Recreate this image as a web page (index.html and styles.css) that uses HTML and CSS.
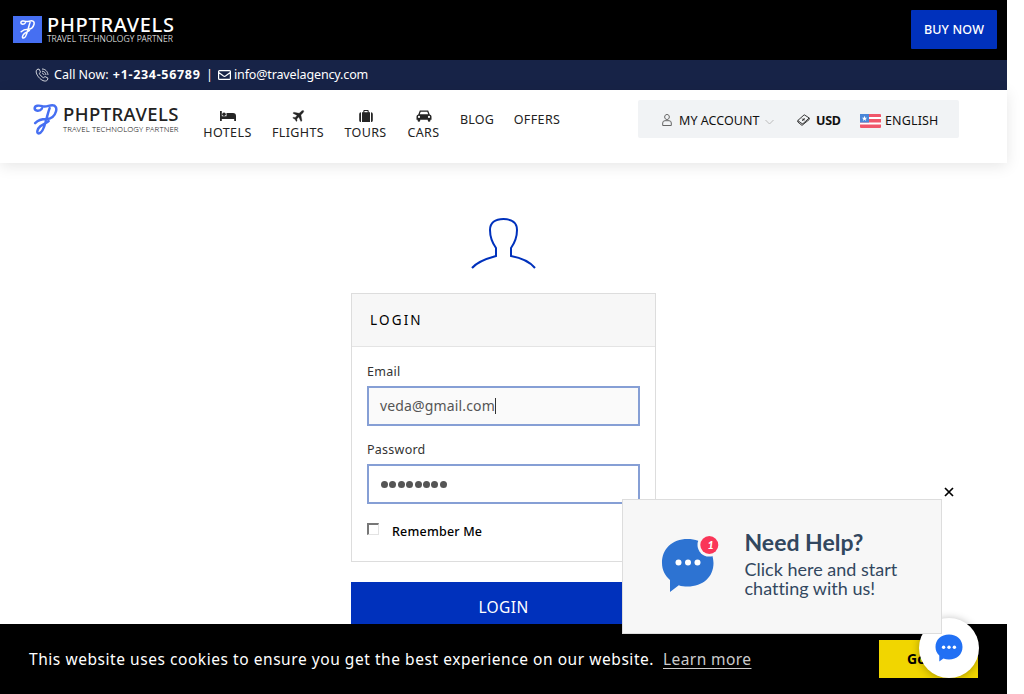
FILE: index.html
```html
<!DOCTYPE html>
<html lang="en">
<head>
<meta charset="utf-8">
<title>Login</title>
<link rel="stylesheet" href="styles.css">
</head>
<body>
<svg class="defs" width="0" height="0">
  <symbol id="swirl" viewBox="0 0 24 30">
    <path d="M8.5 4.5C6.5 7.5 1.5 7 1.5 4.2C1.5 1.5 5.5 1 9 2.2C13 3.2 15 1.2 18.5 1.2C22 1.2 23 4 22.2 7C21 11.5 17.5 14.5 12.5 14.5M16 4C14.5 8 13.8 11.5 12.5 16C11 22 8.5 28.5 5.5 28.5C3 28.5 4 24 7 21.5C9.5 19.5 13 18.5 15 16.5M12.5 14.5C9 14.5 5 15.5 2 18.5" fill="none" stroke="currentColor" stroke-width="2.4" stroke-linecap="round" stroke-linejoin="round"/>
  </symbol>
</svg>
<div class="page">
  <header>
    <div class="promo">
      <div class="brand brand-light">
        <span class="brand-mark"><svg class="mark"><use href="#swirl"/></svg></span>
        <span class="brand-text"><b>PHPTRAVELS</b><small>TRAVEL TECHNOLOGY PARTNER</small></span>
      </div>
      <a class="buy">BUY NOW</a>
    </div>
    <div class="contact">
      <svg class="phone" viewBox="0 0 14 14"><path d="M2 1.5L4 1L5.5 4L4.4 5.4C5 7.2 6.8 9 8.6 9.7L10 8.5L13 10.2L12.3 12.2C10 14.4 6 12 3.8 9.3C1.5 6.6.3 3.3 2 1.5ZM7 1C10.3 1 12.8 3.5 13 7M7 3.2C9.2 3.2 10.8 4.8 11 7M7 5.2C8 5.2 8.8 6 9 7" fill="none" stroke="#fff" stroke-width=".8"/></svg>
      <span class="call">Call Now: <b>+1-234-56789</b></span>
      <span class="bar">|</span>
      <svg class="mail" viewBox="0 0 13 12"><path d="M1.5 1.6H11.5Q12.4 1.6 12.4 2.5V9.5Q12.4 10.4 11.5 10.4H1.5Q.6 10.4 .6 9.5V2.5Q.6 1.6 1.5 1.6ZM.8 3.5L5.5 7Q6.5 7.7 7.5 7L12.2 3.5" fill="none" stroke="#fff" stroke-width="1.2"/></svg>
      <span class="addr">info@travelagency.com</span>
    </div>
    <div class="main">
      <div class="brand brand-dark">
        <svg class="mark"><use href="#swirl"/></svg>
        <span class="brand-text"><b>PHPTRAVELS</b><small>TRAVEL TECHNOLOGY PARTNER</small></span>
      </div>
      <nav>
        <a class="item hotels"><svg viewBox="0 0 16 12"><path d="M0 1H1.8V6.7H16V11H14.2V9H1.8V11H0ZM6.5 3H13Q16 3 16 6V7H1.8V6.3H6.5Z"/><circle cx="4" cy="4.3" r="1.8"/></svg>HOTELS</a>
        <a class="item flights"><svg viewBox="0 0 16 12"><path d="M13.4.6C14.2 1.2 13.6 2.3 12.8 3.1L10.9 5L12 10.7L10.9 11.5L8.8 7.1L6.8 9L7.1 10.8L6.3 11.5L5 9.2L2.7 7.9L3.4 7.2L5.2 7.4L7.1 5.4L2.9 3.2L3.8 2.2L9.2 3.3L11.1 1.4C12 .6 12.8.2 13.4.6Z" stroke="#252525" stroke-width=".3"/></svg>FLIGHTS</a>
        <a class="item tours"><svg viewBox="0 0 16 12"><path fill-rule="evenodd" d="M1.5 2.2H3V12Q1.2 12 1.2 10.5V4Q1.2 2.4 3 2.2ZM4 2.2H5.3V1Q5.3 0 6.3 0H9.7Q10.7 0 10.7 1V2.2H12V12H4ZM6.4 2.2H9.6V1H6.4ZM13 2.2Q14.8 2.4 14.8 4V10.5Q14.8 12 13 12Z"/></svg>TOURS</a>
        <a class="item cars"><svg viewBox="0 0 16 12"><path fill-rule="evenodd" d="M3.8.5H12.2L13.7 4.4Q15.5 4.9 15.5 6.4V9.8H14.4V10.5Q14.4 11.7 13.1 11.7Q11.8 11.7 11.8 10.5V9.8H4.2V10.5Q4.2 11.7 2.9 11.7Q1.6 11.7 1.6 10.5V9.8H.5V6.4Q.5 4.9 2.3 4.4ZM4.7 1.8L3.8 4.3H12.2L11.3 1.8ZM3 5.8A1.1 1.1 0 1 0 3 8A1.1 1.1 0 1 0 3 5.8M13 5.8A1.1 1.1 0 1 0 13 8A1.1 1.1 0 1 0 13 5.8"/></svg>CARS</a>
        <a class="item blog">BLOG</a>
        <a class="item offers">OFFERS</a>
      </nav>
      <div class="tools">
        <svg class="user" viewBox="0 0 10 12"><path d="M5 .5C3.5.5 2.7 1.5 2.7 3S3.6 5.5 5 5.5S7.3 4.5 7.3 3S6.5.5 5 .5M3 6.7H7Q9.3 6.7 9.3 9V11.5H.7V9Q.7 6.7 3 6.7Z" fill="none" stroke="#666"/></svg>
        <span class="account">MY ACCOUNT</span>
        <svg class="chev" viewBox="0 0 9 6"><path d="M.5 1L4.5 5L8.5 1" fill="none" stroke="#bbb"/></svg>
        <svg class="money" viewBox="0 0 13 12"><path d="M.8 6.5L7.2.8L9 1.9L12.2 4L5.8 9.8L4 9ZM.8 6.5V8L5 11.4L12.2 5.5V4M5.2 4.6Q6 6.6 7.8 5.8M7.5 4L5.3 7" fill="none" stroke="#222" stroke-width=".9"/></svg>
        <b class="usd">USD</b>
        <svg class="flag" viewBox="0 0 21 14"><rect width="21" height="14" rx="1" fill="#f0566a"/><path d="M0 4H21M0 9.5H21" stroke="#fff" stroke-width="2"/><rect width="9" height="8.5" fill="#4a86d8"/><path d="M4.5 1.7L5.2 3.7L7.2 3.8L5.6 5L6.2 7L4.5 5.8L2.8 7L3.4 5L1.8 3.8L3.8 3.7Z" fill="#fff"/></svg>
        <span class="lang">ENGLISH</span>
      </div>
    </div>
  </header>
  <main>
    <svg class="avatar" viewBox="0 0 66 53"><path d="M1 51C6 45 14 42 25 39V31C20 24 19 18 19 13C19 6 24 2 32.5 2S46 6 46 13C46 18 45 24 40 31V39C51 41 59 45 64 51" fill="none" stroke="#0031bc" stroke-width="2"/></svg>
    <section class="card">
      <h1>LOGIN</h1>
      <div class="form">
        <label class="lbl-email">Email</label>
        <div class="field focus"><span class="value">veda@gmail.com</span><i class="caret"></i></div>
        <label class="lbl-pass">Password</label>
        <div class="field dots"><i></i><i></i><i></i><i></i><i></i><i></i><i></i><i></i></div>
        <div class="remember"><span class="check"></span><span class="remember-text">Remember Me</span></div>
      </div>
    </section>
    <div class="submit"><span>LOGIN</span></div>
  </main>
  <footer class="cookies">
    <p><span class="notice">This website uses cookies to ensure you get the best experience on our website.</span><a class="more">Learn more</a></p>
    <div class="got">Got it!</div>
  </footer>
</div>
<div class="launcher"><svg viewBox="0 0 28 28"><path d="M14 .5C22 .5 27.5 5.5 27.5 13S22 25.5 14 25.5C12 25.5 10 25.2 8.4 24.6L4.3 27.5V21.5C1.9 19.5.5 16.5.5 13C.5 5.5 6 .5 14 .5Z" fill="#2170f4"/><g fill="#fff"><circle cx="8.6" cy="13.2" r="1.7"/><circle cx="14" cy="13.2" r="1.7"/><circle cx="19.4" cy="13.2" r="1.7"/></g></svg></div>
<aside class="help">
  <svg class="bubble" viewBox="0 0 58 60"><path d="M26.5 5C42 5 52.5 15 52.5 29S42 52.5 26.5 52.5C23.5 52.5 20.5 52.2 17.8 51.2L9 58V46C4 41.5 1 36 1 29C1 15 11 5 26.5 5Z" fill="#2d73d2"/><g fill="#fff"><circle cx="17.5" cy="28.5" r="3"/><circle cx="27" cy="28.5" r="3"/><circle cx="36.5" cy="28.5" r="3"/></g><circle cx="48" cy="11" r="11.5" fill="#f7f7f7"/><circle cx="48.3" cy="11" r="9" fill="#fa3658"/><text class="count" x="46.6" y="15">1</text></svg>
  <div class="help-text"><strong>Need Help?</strong><span>Click here and start</span><span class="second">chatting with us!</span></div>
</aside>
<svg class="close" viewBox="0 0 10 10"><path d="M1 1L9 9M9 1L1 9" stroke="#000" stroke-width="1.7"/></svg>
</body>
</html>
```
FILE: styles.css
```css
* { box-sizing: border-box; }
body { margin: 0; width: 1024px; height: 694px; overflow: hidden; background: #fff; color: #222; font-family: "Noto Sans", sans-serif; font-size: 12.5px; white-space: nowrap; }
svg { display: block; flex: none; }
.defs { position: absolute; }
.page { width: 1007px; height: 694px; display: flex; flex-direction: column; }
.promo { height: 60px; background: #000; display: flex; justify-content: space-between; align-items: flex-start; padding: 10px 10px 0 13px; }
.brand { display: flex; }
.brand-light { padding-top: 6px; color: #fff; gap: 5px; }
.brand-mark { width: 29px; height: 27px; background: #466ff2; display: flex; justify-content: center; padding-top: 4px; }
.brand-mark .mark { width: 17px; height: 19px; }
.brand-text { display: flex; flex-direction: column; }
.brand-text b { font-weight: 500; font-size: 20px; line-height: 17px; height: 18px; }
.brand-light b { letter-spacing: .7px; }
.brand-light small { font-size: 8.6px; line-height: 10px; font-weight: 300; letter-spacing: .06px; }
.buy { width: 86px; height: 39px; border-radius: 1px; background: #0031bc; color: #fff; text-align: center; line-height: 39px; font-weight: 500; font-size: 12.5px; letter-spacing: .15px; }
.contact { height: 30px; background: #172347; color: #fff; display: flex; align-items: center; padding: 0 0 1px 35px; }
.phone { width: 14px; height: 14px; margin-right: 5px; }
.call { width: 152px; }
.call b { letter-spacing: .68px; margin-left: 1px; }
.bar { width: 12px; }
.mail { width: 13px; height: 12px; margin-right: 3px; }
.addr { letter-spacing: -.14px; }
.main { height: 73px; background: #fff; box-shadow: 0 3px 14px rgba(0,0,0,.1); display: flex; align-items: flex-start; }
.brand-dark { width: 203px; padding: 14px 0 0 33px; gap: 5px; }
.brand-dark .mark { width: 25px; height: 31px; color: #466ff2; }
.brand-dark small { font-size: 7.8px; line-height: 10px; font-weight: 300; letter-spacing: .11px; }
.brand-dark b { font-size: 18.5px; height: 20px; line-height: 20px; letter-spacing: .42px; }
nav { display: flex; gap: 20px; width: 435px; padding-top: 20px; }
.item { display: flex; flex-direction: column; align-items: center; line-height: 18px; letter-spacing: .4px; }
.item svg { width: 16px; height: 12px; margin: 0 0 2px; fill: #252525; }
.blog, .offers { padding-top: 1px; }
.hotels { width: 49px; } .flights { width: 52px; } .tours { width: 43px; } .cars { width: 33px; } .blog { width: 34px; letter-spacing: .15px; } .offers { width: 46px; }
.tools { margin-top: 10px; width: 321px; height: 38px; border-radius: 2px; background: #f1f3f5; display: flex; align-items: center; padding: 2px 0 0 24px; color: #111; }
.user { width: 10px; height: 12px; margin-right: 7px; }
.account { width: 86px; letter-spacing: .05px; }
.chev { width: 9px; height: 6px; margin: 3px 23px 0 0; }
.money { width: 13px; height: 12px; margin-right: 6px; }
.usd { width: 44px; letter-spacing: -.3px; }
.flag { width: 21px; height: 14px; margin: 2px 4px 0 0; }
.lang { letter-spacing: .15px; }
main { flex: 1; display: flex; flex-direction: column; align-items: center; padding-top: 54px; min-height: 0; }
.avatar { width: 66px; height: 53px; margin-bottom: 23px; }
.card { width: 305px; height: 269px; flex: none; border: 1px solid #ddd; }
h1 { margin: 0; height: 53px; border-bottom: 1px solid #e4e4e4; background: #f7f7f7; font-size: 13.5px; font-weight: 400; letter-spacing: 2.15px; line-height: 53px; padding-left: 18px; color: #000; }
.form { padding: 16px 15px 15px; display: flex; flex-direction: column; }
label { line-height: 18px; margin-bottom: 5px; color: #333; }
.lbl-email, .lbl-pass { letter-spacing: .25px; }
.field { height: 40px; border: 2px solid #869fd5; display: flex; align-items: center; padding-left: 11px; margin-bottom: 15px; color: #555; font-size: 14px; }
.focus { background: #fafafa; padding-bottom: 1px; }
.value { letter-spacing: .15px; }
.caret { width: 1px; height: 16px; background: #333; }
.dots { gap: 1.4px; padding-left: 12px; }
.dots i { width: 7px; height: 7px; border-radius: 50%; background: #555; }
.remember { display: flex; color: #000; font-weight: 500; line-height: 18px; margin-top: 4px; letter-spacing: .2px; }
.check { width: 12px; height: 12px; border: 1px solid #e3e3e3; border-top: 2px solid #777; border-left: 2px solid #777; margin-right: 13px; }
.submit { width: 305px; height: 50px; flex: none; background: #0031bc; margin-top: 20px; color: #fff; font-size: 15.5px; text-align: center; line-height: 50px; letter-spacing: .4px; }
.cookies { height: 70px; flex: none; z-index: 1; background: #000; color: #fff; display: flex; align-items: center; justify-content: space-between; padding: 0 29px; font-size: 15.5px; }
.cookies p { margin: 0; display: flex; }
.notice { width: 634px; letter-spacing: .55px; }
.more { color: #ccc; text-decoration: underline; text-underline-offset: 3px; letter-spacing: .42px; }
.got { width: 99px; height: 38px; background: #f1d600; color: #000; font-weight: 700; font-size: 14px; line-height: 38px; padding-left: 28px; }
.launcher { position: absolute; z-index: 2; left: 919px; top: 618px; width: 60px; height: 60px; border-radius: 50%; background: #fff; box-shadow: 0 1px 8px rgba(0,0,0,.3); display: flex; align-items: center; justify-content: center; }
.launcher svg { width: 28px; height: 28px; }
.help { position: absolute; z-index: 3; left: 622px; top: 499px; width: 320px; height: 135px; border: 1px solid #ddd; background: #f7f7f7; display: flex; padding: 34px 0 0 38px; font-family: Lato, sans-serif; color: #32475f; }
.bubble { width: 58px; height: 60px; margin: 0 26px 0 -.5px; }
.count { fill: #fff; font: italic 900 11px Lato, sans-serif; }
.help-text { display: flex; flex-direction: column; font-size: 18px; line-height: 19px; font-variant-ligatures: none; }
.help-text strong { font-size: 23px; line-height: 18px; margin: -1px 0 9px; }
.close { position: absolute; z-index: 3; left: 944px; top: 486.5px; width: 10px; height: 10px; }
```
